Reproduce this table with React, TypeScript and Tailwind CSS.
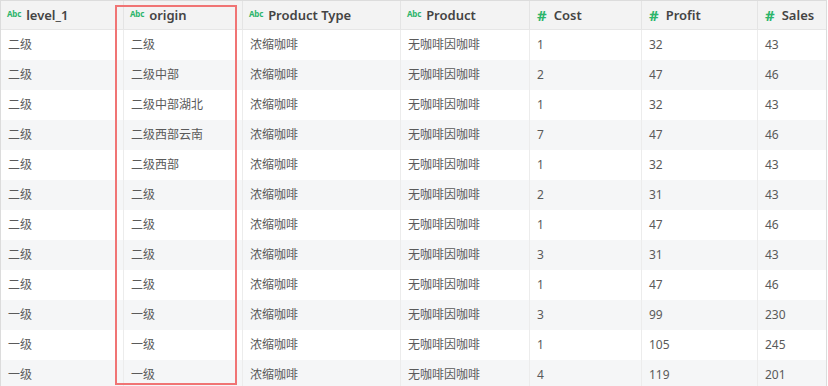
import React from "react";

type Col = { name: string; w: number; type: "abc" | "num" };
const cols: Col[] = [
  { name: "level_1", w: 123, type: "abc" },
  { name: "origin", w: 119, type: "abc" },
  { name: "Product Type", w: 158, type: "abc" },
  { name: "Product", w: 129, type: "abc" },
  { name: "Cost", w: 112, type: "num" },
  { name: "Profit", w: 116, type: "num" },
  { name: "Sales", w: 70, type: "num" },
];

const rows: string[][] = [
  ["二级", "二级", "浓缩咖啡", "无咖啡因咖啡", "1", "32", "43"],
  ["二级", "二级中部", "浓缩咖啡", "无咖啡因咖啡", "2", "47", "46"],
  ["二级", "二级中部湖北", "浓缩咖啡", "无咖啡因咖啡", "1", "32", "43"],
  ["二级", "二级西部云南", "浓缩咖啡", "无咖啡因咖啡", "7", "47", "46"],
  ["二级", "二级西部", "浓缩咖啡", "无咖啡因咖啡", "1", "32", "43"],
  ["二级", "二级", "浓缩咖啡", "无咖啡因咖啡", "2", "31", "43"],
  ["二级", "二级", "浓缩咖啡", "无咖啡因咖啡", "1", "47", "46"],
  ["二级", "二级", "浓缩咖啡", "无咖啡因咖啡", "3", "31", "43"],
  ["二级", "二级", "浓缩咖啡", "无咖啡因咖啡", "1", "47", "46"],
  ["一级", "一级", "浓缩咖啡", "无咖啡因咖啡", "3", "99", "230"],
  ["一级", "一级", "浓缩咖啡", "无咖啡因咖啡", "1", "105", "245"],
  ["一级", "一级", "浓缩咖啡", "无咖啡因咖啡", "4", "119", "201"],
];

const font = { fontFamily: '"Noto Sans", "Noto Sans CJK SC", sans-serif' };

export default function App() {
  return (
    <div className="relative w-[828px] h-[386px] overflow-hidden bg-white" style={font}>
      <div className="w-[827px] border-l border-t border-r border-[#dcdcdc]">
        <div className="flex h-[29px] bg-[#f3f3f3] border-b border-[#e6e6e6]">
          {cols.map((c, i) => (
            <div
              key={c.name}
              className={`flex items-center shrink-0 pl-[6px] ${i < cols.length - 1 ? "border-r border-[#e4e4e4]" : ""}`}
              style={{ width: c.w }}
            >
              {c.type === "abc" ? (
                <span className="text-[8px] font-bold text-[#2db56b] leading-none mr-[5px] -mt-[3px] tracking-[-0.2px]">Abc</span>
              ) : (
                <span className="text-[15px] font-bold text-[#2db56b] leading-none ml-[1px] mr-[7px]">#</span>
              )}
              <span className="text-[13px] font-semibold text-[#444] leading-none">{c.name}</span>
            </div>
          ))}
        </div>
        {rows.map((r, ri) => (
          <div key={ri} className={`flex h-[30px] ${ri % 2 === 1 ? "bg-[#f5f6f7]" : "bg-white"}`}>
            {r.map((v, ci) => (
              <div
                key={ci}
                className={`flex items-center shrink-0 pl-[7px] text-[12px] text-[#5a5a5a] ${ci < cols.length - 1 ? "border-r border-[#ececec]" : ""}`}
                style={{ width: cols[ci].w }}
              >
                {v}
              </div>
            ))}
          </div>
        ))}
      </div>
      <div className="absolute left-[115px] top-[5px] w-[122px] h-[380px] border-2 border-[#f07474] pointer-events-none" />
    </div>
  );
}
